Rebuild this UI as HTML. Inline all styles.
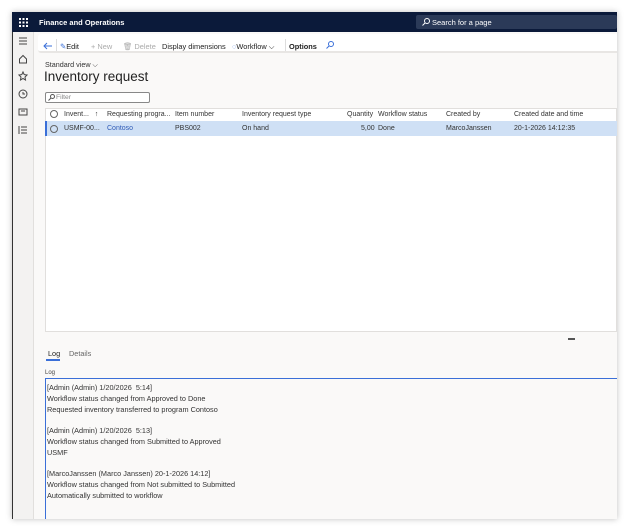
<!DOCTYPE html>
<html><head><meta charset="utf-8"><style>
*{margin:0;padding:0;box-sizing:border-box}
body{width:630px;height:531px;background:#fff;font-family:"Liberation Sans",sans-serif;position:relative;overflow:hidden;color:#222}
.win{position:absolute;left:12px;top:12px;width:605px;height:507px;background:#faf9f8;box-shadow:0 0 6px rgba(0,0,0,.25);overflow:hidden}
.top{position:absolute;left:0;top:0;width:605px;height:20px;background:#0b1a3a;color:#fff;font-size:7.5px;font-weight:bold}
.rail{position:absolute;left:0;top:20px;width:22px;height:487px;background:#f3f2f1;border-left:1.5px solid #333;border-right:1px solid #e1dfdd}
.abs{position:absolute;white-space:nowrap}
.t{font-size:7.4px}
.hdr{font-size:7px;color:#333}
</style></head><body>
<div class="win">
 <div class="top">
  <svg class="abs" style="left:7px;top:6px" width="9" height="9"><g fill="#fff"><rect x="0" y="0" width="2" height="2"/><rect x="3.5" y="0" width="2" height="2"/><rect x="7" y="0" width="2" height="2"/><rect x="0" y="3.5" width="2" height="2"/><rect x="3.5" y="3.5" width="2" height="2"/><rect x="7" y="3.5" width="2" height="2"/><rect x="0" y="7" width="2" height="2"/><rect x="3.5" y="7" width="2" height="2"/><rect x="7" y="7" width="2" height="2"/></g></svg>
  <div class="abs" style="left:27px;top:6px">Finance and Operations</div>
  <div class="abs" style="left:404px;top:3px;width:201px;height:14px;background:#2b3a58;border-radius:2px;font-weight:normal;font-size:7.5px;padding:3px 0 0 16px">Search for a page</div>
  <svg class="abs" style="left:410px;top:6px" width="8" height="8"><circle cx="5" cy="3" r="2.5" stroke="#fff" fill="none"/><line x1="3" y1="5" x2="0.5" y2="7.5" stroke="#fff"/></svg>
 </div>
 <div class="rail">
  <svg class="abs" style="left:5px;top:4px" width="10" height="110" stroke="#444" fill="none" stroke-width="1">
   <path d="M1 2H9M1 5H9M1 8H9"/>
   <path d="M1.5 23L5 19.5L8.5 23V27H1.5Z"/>
   <path d="M5 36L6.2 38.6L9 39L7 41L7.5 44L5 42.5L2.5 44L3 41L1 39L3.8 38.6Z"/>
   <circle cx="5" cy="58" r="4"/><path d="M5 56V58H7"/>
   <rect x="1" y="73" width="8" height="6"/><path d="M3 75H7"/>
   <path d="M1 90V98M3 91H9M3 94H9M3 97H9"/>
  </svg>
 </div>
 <div class="abs" style="left:26px;top:22px;width:579px;height:19px;background:#fff;border-bottom:2px solid #e8e6e4;border-radius:3px 0 0 3px"></div>
 <svg class="abs" style="left:31px;top:30px" width="10" height="8"><path d="M9 4H1M4 1L1 4L4 7" stroke="#3a6fd8" fill="none"/></svg>
 <div class="abs t" style="left:44px;top:27px;height:12px;border-left:1px solid #ddd"></div>
 <div class="abs t" style="left:48px;top:30px"><span style="color:#3a6fd8">✎</span>Edit</div>
 <div class="abs t" style="left:79px;top:30px;color:#aaa">+ New</div>
 <div class="abs t" style="left:111px;top:30px;color:#aaa">🗑 Delete</div>
 <div class="abs t" style="left:150px;top:30px">Display dimensions</div>
 <div class="abs t" style="left:220px;top:30px"><span style="color:#3a6fd8">◌</span>Workflow ⌵</div>
 <div class="abs t" style="left:273px;top:27px;height:12px;border-left:1px solid #ddd"></div>
 <div class="abs t" style="left:277px;top:30px;font-weight:bold">Options</div>
 <svg class="abs" style="left:314px;top:29px" width="8" height="8"><circle cx="5" cy="3" r="2.5" stroke="#3a6fd8" fill="none"/><line x1="3" y1="5" x2="0.5" y2="7.5" stroke="#3a6fd8"/></svg>
 <div class="abs" style="left:33px;top:48px;font-size:7.2px;color:#333">Standard view ⌵</div>
 <div class="abs" style="left:32px;top:57px;font-size:13.5px;color:#222">Inventory request</div>
 <div class="abs" style="left:33px;top:80px;width:105px;height:11px;border:1px solid #888;border-radius:2px;background:#fff;font-size:6.8px;color:#888;padding:1px 0 0 10px">Filter</div>
 <svg class="abs" style="left:36px;top:82px" width="7" height="7"><circle cx="4.5" cy="2.5" r="2" stroke="#555" fill="none"/><line x1="3" y1="4" x2="0.5" y2="6.5" stroke="#555"/></svg>
 <div class="abs" style="left:33px;top:96px;width:572px;height:224px;background:#fff;border:1px solid #e1dfdd"></div>
 <div class="abs" style="left:33px;top:109px;width:572px;height:15px;background:#cfe0f5;border-left:2px solid #3a6fd8"></div>
 <div class="abs" style="left:38px;top:98px;width:8px;height:8px;border:1px solid #666;border-radius:50%"></div>
 <div class="abs" style="left:38px;top:113px;width:8px;height:8px;border:1px solid #666;border-radius:50%"></div>
 <div class="abs hdr" style="left:52px;top:99px">Invent... &nbsp;&nbsp;↑</div>
 <div class="abs hdr" style="left:95px;top:99px">Requesting progra...</div>
 <div class="abs hdr" style="left:163px;top:99px">Item number</div>
 <div class="abs hdr" style="left:230px;top:99px">Inventory request type</div>
 <div class="abs hdr" style="left:335px;top:99px">Quantity</div>
 <div class="abs hdr" style="left:366px;top:99px">Workflow status</div>
 <div class="abs hdr" style="left:434px;top:99px">Created by</div>
 <div class="abs hdr" style="left:502px;top:99px">Created date and time</div>
 <div class="abs hdr" style="left:52px;top:113px">USMF-00...</div>
 <div class="abs hdr" style="left:95px;top:113px;color:#2f5bb7">Contoso</div>
 <div class="abs hdr" style="left:163px;top:113px">PBS002</div>
 <div class="abs hdr" style="left:230px;top:113px">On hand</div>
 <div class="abs hdr" style="left:349px;top:113px">5,00</div>
 <div class="abs hdr" style="left:366px;top:113px">Done</div>
 <div class="abs hdr" style="left:434px;top:113px">MarcoJanssen</div>
 <div class="abs hdr" style="left:502px;top:113px">20-1-2026 14:12:35</div>
 <div class="abs" style="left:556px;top:326px;width:7px;height:2px;background:#555"></div>
 <div class="abs" style="left:36px;top:337px;font-size:7.3px">Log</div>
 <div class="abs" style="left:34px;top:347px;width:14px;height:1.5px;background:#3a6fd8"></div>
 <div class="abs" style="left:57px;top:337px;font-size:7.3px;color:#666">Details</div>
 <div class="abs" style="left:33px;top:358px;font-size:6px;color:#444">Log</div>
 <div class="abs" style="left:33px;top:366px;width:572px;height:141px;border-top:1px solid #3a6fd8;border-left:1px solid #3a6fd8;background:#faf9f8"></div>
 <div class="abs" style="left:35px;top:371px;font-size:7.3px;line-height:10.8px;color:#333">[Admin (Admin) 1/20/2026 &nbsp;5:14]<br>Workflow status changed from Approved to Done<br>Requested inventory transferred to program Contoso<br><br>[Admin (Admin) 1/20/2026 &nbsp;5:13]<br>Workflow status changed from Submitted to Approved<br>USMF<br><br>[MarcoJanssen (Marco Janssen) 20-1-2026 14:12]<br>Workflow status changed from Not submitted to Submitted<br>Automatically submitted to workflow</div>
</div>
</body></html>
